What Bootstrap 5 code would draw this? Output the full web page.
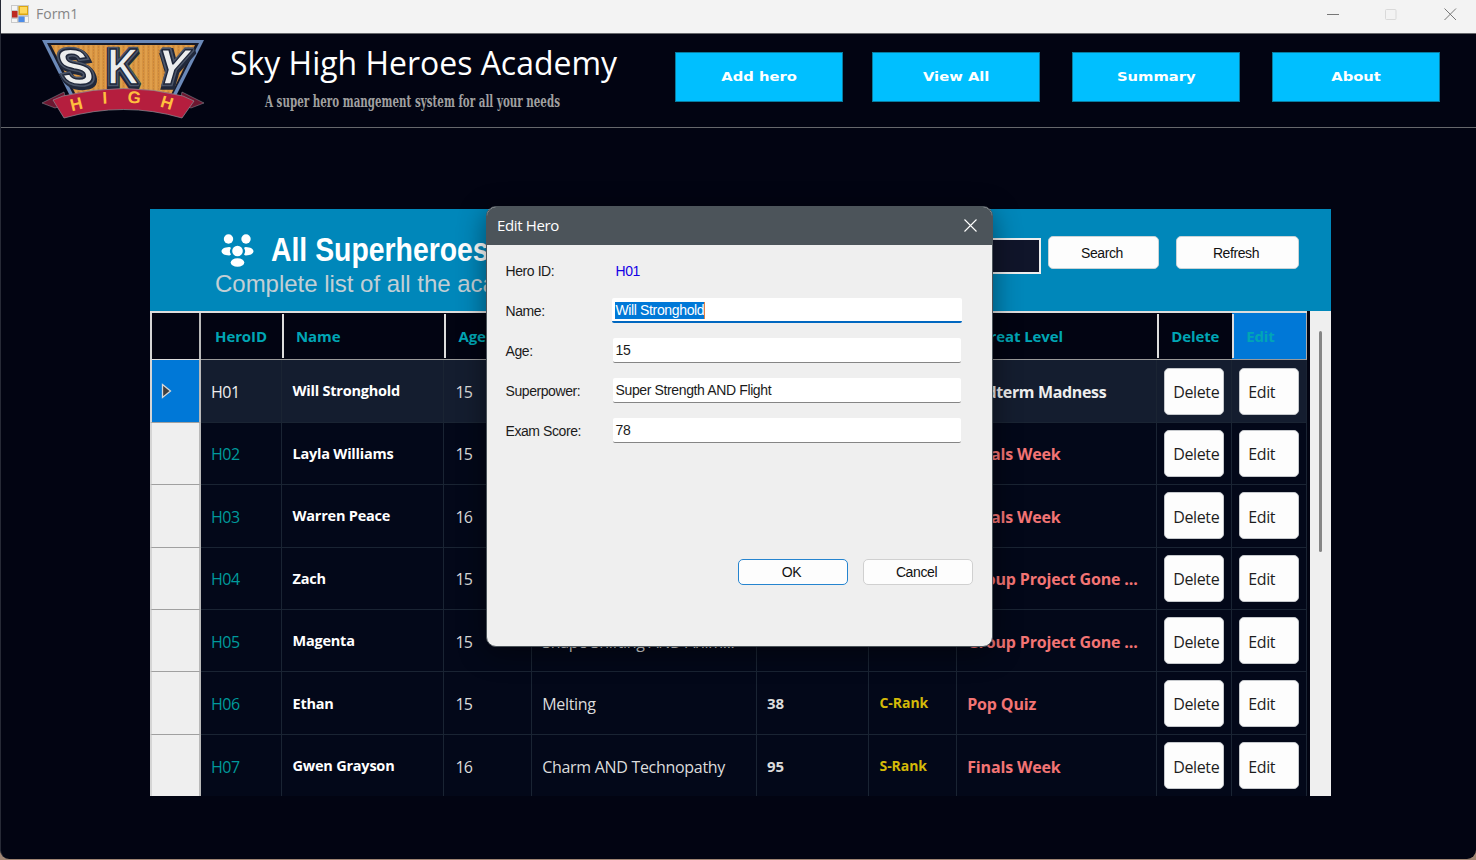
<!DOCTYPE html>
<html lang="en">
<head>
<meta charset="utf-8">
<title>Form1</title>
<link href="https://cdn.jsdelivr.net/npm/bootstrap@5.3.0/dist/css/bootstrap.min.css" rel="stylesheet">
<style>
  body { width: 1476px; height: 860px; background: #a08573; font-family: "Open Sans", "Noto Sans", sans-serif; line-height: 1.2; }
  .window { height: 859px; background: #020412; border-radius: 0 0 9px 9px; border-left: 1px solid #272a36; }
  .titlebar { height: 33px; margin-left: -1px; background: #f3f3f3; color: #858585; padding: 0 19px 6px 11px; }
  .titlebar span { font-size: 14px; letter-spacing: 0; margin: 2px 0 0 7px; }
  .brandbar { height: 95px; border: 1px solid #66686c; border-left: 0; border-right: 0; }
  .logo-art { width: 166px; height: 84px; margin: 3px 0 0 39px; }
  .brand-text { width: 440px; padding-left: 24px; }
  .brand-title { font-size: 33px; line-height: 40px; margin-top: 9px; color: #fff; font-weight: 400; transform-origin: 0 0; transform: scaleX(.968); }
  .brand-sub { font: bold 16px/20px "DejaVu Serif", serif; color: #a0a0a0; margin: 9px 0 0 35px; transform-origin: 0 0; transform: scaleX(.645); }
  .navtiles { padding-left: 29px; gap: 32px; }
  .navtile { width: 168px; height: 50px; margin-top: 18px; flex: none; border-radius: 0; background: #00bfff; border: 1px solid #087c9f; color: #fff; font: bold 12.5px "DejaVu Sans", sans-serif; padding: 0 0 2px; }
  .navtile:first-child { margin-right: -3px; }
  .navtile:hover { background: #00bfff; color: #fff; }
  .navtile span { display: inline-block; transform: scaleX(1.18); }
  .panel { width: 1181px; height: 587px; margin: 81px 0 0 149px; background: #020412; overflow: hidden; }
  .panel-top { height: 102px; background: #0087ba; padding: 27px 32px 0 65px; }
  .people-icon { margin: -3px 0 0 4px; }
  .panel-title { font: bold 32.5px/37px "Liberation Sans", sans-serif; color: #fff; margin: -4px 0 0 15px; transform-origin: 0 0; transform: scaleX(.873); }
  .panel-sub { font: 24px/28px "Liberation Sans", sans-serif; color: #c3cfd5; letter-spacing: -.02px; padding-top: 1px; }
  .searchbox { width: 250px; height: 36px; border-radius: 0; background: #10152a; border: 2px solid #eee; margin: 2px 7px 0 0; padding: 0; }
  .winbtn { font: 14px "Liberation Sans", sans-serif; letter-spacing: -.4px; background: #fdfdfd; color: #111; border: 1px solid #c9d3d7; border-radius: 5px; padding: 0 3px 0 0; }
  .find { width: 111px; height: 33px; margin-right: 17px; }
  .reload { width: 123px; height: 33px; }
  .gridrow { display: grid; grid-template-columns: 51px 81px 162.4px 87.3px 225.2px 112.6px 87.7px 200px 75px 74.8px; height: 62.45px; width: 1157px; }
  .gridrow > div { border-right: 1px solid #1a2433; border-bottom: 1px solid #1a2433; padding-left: 10px; white-space: nowrap; overflow: hidden; display: flex; align-items: center; background: #030819; color: #dcdcdc; font-size: 16px; }
  .gridrow > .rowhead { background: #efefef; border-left: 2px solid #d5d5d5; border-right: 2px solid #b9b9b9; border-bottom: 1px solid #a0a0a0; padding-left: 9px; }
  .gridhead { height: 49.3px; border-top: 2px solid #ddd; }
  .gridhead > div { background: #020412; color: #00a6b5; font-size: 15px; font-weight: 700; letter-spacing: -.1px; border-bottom: 1px solid #999; padding-left: 14px; border-right: 0; }
  .gridhead > div + div + div { background: linear-gradient(#ddd, #ddd) no-repeat 0 50% / 2px 44px #020412; }
  .gridhead > .rowhead { background: #020412; border-bottom: 1px solid #ddd; }
  .gridhead > div.hot { background: linear-gradient(#ddd, #ddd) no-repeat 0 50% / 2px 44px #0078d7; border-right: 1px solid #aaa; }
  .gridrow > .hid { color: #009a9c; letter-spacing: -.5px; padding-top: 3px; }
  .gridrow > .hname { color: #fff; font-size: 14.5px; font-weight: 700; letter-spacing: -.22px; padding-left: 10.5px; }
  .gridrow > .hage { letter-spacing: -.7px; padding: 3px 0 0 11px; }
  .gridrow > .hpower { letter-spacing: -.3px; padding: 3px 0 0 10.500px; }
  .gridrow > .hscore { font-size: 15px; font-weight: 700; }
  .gridrow > .hrank { color: #d4ba08; font-size: 14px; font-weight: 700; letter-spacing: -.05px; padding-top: 1px; }
  .gridrow > .hthreat { color: #f37474; font-weight: 700; letter-spacing: -.15px; padding-top: 3px; }
  .gridrow.current > .hthreat { letter-spacing: -.35px; }
  .gridrow > .act { padding: 0 0 0 7px; }
  .cellbtn { width: 60px; height: 47px; background: #fdfdfd; color: #1d1d1d; border: 1px solid #c5c8cc; border-radius: 5px; padding: 2px 0 0 8px; font-size: 16px; letter-spacing: -.35px; text-align: left; }
  .current > div { background: #141d2f; }
  .gridrow.current > .rowhead { background: #0078d7; }
  .gridrow.current > .hid, .gridrow.current > .hthreat { color: #eee; }
  .scroll-track { width: 21px; background: #efefef; padding: 20px 0 0 9px; }
  .scroll-thumb { width: 3px; height: 221px; background: #858585; border-radius: 2px; }
  .dialog { position: absolute; left: 486px; top: 206px; width: 507px; height: 441px; border: 1px solid #4c545a; border-radius: 10px; background: #efefef; overflow: hidden; box-shadow: 0 6px 28px rgba(0,0,0,.45); font: 14px/20px "Liberation Sans", sans-serif; letter-spacing: -.42px; color: #1b1b1b; }
  .dialog-head { height: 38px; background: #4c545a; color: #fff; font: 15px "Open Sans", sans-serif; padding: 0 15px 2px 10px; letter-spacing: -.35px; }
  .dialog-body { padding: 16px 30px 0 18.500px; }
  .line { height: 40px; }
  .line label { width: 107px; }
  .idval { color: #1400e6; padding-left: 3px; }
  .field { height: 25px; width: 348px; background: #fff; border: 0; border-bottom: 1px solid #858585; border-radius: 2px; padding: 2px 3px; margin-top: -3px; letter-spacing: -.37px; }
  .field.active { width: 350px; border-bottom: 2px solid #0067c0; letter-spacing: -.35px; }
  .field mark { background: #0078d7; color: #fff; padding: 0; border-right: 1px solid #e08040; display: inline-block; line-height: 17px; }
  .actions { gap: 15px; padding: 98px 19px 0 0; }
  .dialog .winbtn { width: 110px; height: 26px; border-color: #d0d0d0; }
  .dialog .winbtn.main { border-color: #2584cf; }
</style>
<script src="https://cdn.jsdelivr.net/npm/bootstrap@5.3.0/dist/js/bootstrap.bundle.min.js"></script>
</head>
<body class="overflow-hidden position-relative">
<div class="window overflow-hidden">
  <header class="titlebar d-flex align-items-center">
    <svg width="18" height="18" viewBox="0 0 18 18"><rect width="18" height="18" fill="#c9c9c9"/><path d="M1 1h5v4H1zM1 14h5v3H1zM14 12h3v5h-3z" fill="#f5f5f5"/><rect x="1" y="6" width="5.500" height="6.500" fill="#bd2a22"/><rect x="7.500" y="1" width="9.500" height="9" fill="#dca712"/><rect x="9" y="2" width="7" height="6.500" fill="#ffd95c"/><rect x="7.500" y="11.500" width="6" height="5.500" fill="#4c8ce8"/></svg>
    <span class="me-auto">Form1</span>
    <svg width="132" height="14" viewBox="0 0 132 14" fill="none"><path d="M2 7.500h12" stroke="#777"/><rect x="60.500" y="2.500" width="10.500" height="10" rx="1" stroke="#d9d9d9"/><path d="M119.500 1.500l11.500 11.500M131 1.500l-11.500 11.500" stroke="#777"/></svg>
  </header>

  <div class="brandbar d-flex">
    <svg class="logo-art flex-shrink-0" viewBox="0 0 166 84">
      <defs>
        <pattern id="grain" width="5" height="3" patternUnits="userSpaceOnUse"><rect width="5" height="3" fill="#d8933f"/><path d="M1 0v3" stroke="#e6ab58"/><path d="M3 1h1" stroke="#b87a3a"/></pattern>
        <path id="arc" d="M32 75Q84 56 144 77"/>
      </defs>
      <path d="M2 3h162L131 69H35z" fill="#6b89b8"/>
      <path d="M7 6h152L128 67H38z" fill="#171b2b"/>
      <path d="M11 8h144L127 66H40z" fill="url(#grain)"/>
      <g font-family="Liberation Sans, sans-serif" font-weight="bold" font-size="48" stroke-linejoin="miter" stroke-miterlimit="2">
        <g fill="#20283b" stroke="#20283b" stroke-width="7">
          <text transform="matrix(1.02 0 .3 1.04 25 49)">S</text><text transform="matrix(.92 0 0 1.04 67 49)">K</text><text transform="matrix(1.02 0 -.3 1.04 112 49)">Y</text>
        </g>
        <g fill="#4d576a" stroke="#4d576a" stroke-width="4.500">
          <text transform="matrix(1.02 0 .3 1.04 24 47)">S</text><text transform="matrix(.92 0 0 1.04 67 47)">K</text><text transform="matrix(1.02 0 -.3 1.04 111 47)">Y</text>
        </g>
        <g fill="#eceded" stroke="#20283b" stroke-width="1.500">
          <text transform="matrix(1.02 0 .3 1.04 24 47)">S</text><text transform="matrix(.92 0 0 1.04 67 47)">K</text><text transform="matrix(1.02 0 -.3 1.04 111 47)">Y</text>
        </g>
      </g>
      <path d="M2 66l22-11 3 12-12 4zM164 66l-22-11-3 12 12 4z" fill="#6c1730" stroke="#9098a0" stroke-width=".5"/>
      <path d="M13 63l10-4Q84 44 143 59l11 5-12 17Q84 64 24 81z" fill="#b51e3e" stroke="#8a8f98" stroke-width=".7"/>
      <text font-family="Liberation Sans, sans-serif" font-weight="bold" font-size="17" letter-spacing="19.500" fill="#ffbf3e"><textPath href="#arc">HIGH</textPath></text>
    </svg>
    <div class="brand-text flex-shrink-0">
      <h1 class="brand-title text-nowrap mb-0">Sky High Heroes Academy</h1>
      <div class="brand-sub text-nowrap">A super hero mangement system for all your needs</div>
    </div>
    <nav class="navtiles d-flex flex-shrink-0">
      <button class="btn navtile"><span>Add hero</span></button>
      <button class="btn navtile"><span>View All</span></button>
      <button class="btn navtile"><span>Summary</span></button>
      <button class="btn navtile"><span>About</span></button>
    </nav>
  </div>

  <main class="panel">
    <div class="panel-top d-flex">
      <div class="flex-fill">
        <div class="d-flex">
          <svg class="people-icon" width="37" height="34" viewBox="0 0 37 34" fill="#fff"><circle cx="9.500" cy="6" r="4.700"/><circle cx="27" cy="6" r="4.700"/><circle cx="18.500" cy="18" r="5.300"/><ellipse cx="18.500" cy="29.500" rx="6.800" ry="4.300"/><path d="M10.200 14C5.500 14.200 2.500 16 2.500 18.300s3 4 7.700 4.200c1.800-.3 1.900-.9 1.400-1.700-1-1.700-1-3.300 0-5 .5-.9.400-1.500-1.400-1.800zM26.800 14c4.700.2 7.700 2 7.700 4.300s-3 4-7.700 4.200c-1.800-.3-1.900-.9-1.400-1.700 1-1.700 1-3.300 0-5-.5-.9-.4-1.500 1.400-1.800z"/></svg>
          <h2 class="panel-title text-nowrap">All Superheroes</h2>
        </div>
        <div class="panel-sub text-nowrap">Complete list of all the aca</div>
      </div>
      <div class="searchbox flex-shrink-0"></div>
      <button class="btn winbtn find flex-shrink-0">Search</button>
      <button class="btn winbtn reload flex-shrink-0">Refresh</button>
    </div>
    <div class="d-flex">
      <div id="heroes" class="me-auto">
        <div class="gridrow gridhead"><div class="rowhead"></div><div>HeroID</div><div>Name</div><div>Age</div><div></div><div></div><div></div><div>Threat Level</div><div>Delete</div><div class="hot">Edit</div></div>
      </div>
      <div class="scroll-track"><div class="scroll-thumb"></div></div>
    </div>
  </main>
</div>

<section class="dialog" role="dialog">
  <div class="dialog-head d-flex align-items-center justify-content-between">Edit Hero
    <svg width="13" height="13" viewBox="0 0 13 13" stroke="#fff" stroke-width="1.100"><path d="M.5.500l12 12M12.500.500l-12 12"/></svg>
  </div>
  <div class="dialog-body">
    <div class="line d-flex"><label>Hero ID:</label><span class="idval">H01</span></div>
    <div class="line d-flex"><label>Name:</label><div class="field active"><mark>Will Stronghold</mark></div></div>
    <div class="line d-flex"><label>Age:</label><div class="field">15</div></div>
    <div class="line d-flex"><label>Superpower:</label><div class="field">Super Strength AND Flight</div></div>
    <div class="line d-flex"><label>Exam Score:</label><div class="field">78</div></div>
  </div>
  <div class="actions d-flex justify-content-end"><button class="btn winbtn main">OK</button><button class="btn winbtn">Cancel</button></div>
</section>
<script>
  const heroes = [
    ["H01", "Will Stronghold", 15, "", "", "", "Midterm Madness"],
    ["H02", "Layla Williams", 15, "", "", "", "Finals Week"],
    ["H03", "Warren Peace", 16, "", "", "", "Finals Week"],
    ["H04", "Zach", 15, "", "", "", "Group Project Gone ..."],
    ["H05", "Magenta", 15, "Shape Shifting AND Anim...", "", "", "Group Project Gone ..."],
    ["H06", "Ethan", 15, "Melting", 38, "C-Rank", "Pop Quiz"],
    ["H07", "Gwen Grayson", 16, "Charm AND Technopathy", 95, "S-Rank", "Finals Week"]
  ];
  const kinds = ["hid", "hname", "hage", "hpower", "hscore", "hrank", "hthreat"];
  const arrow = '<svg width="12" height="16" viewBox="0 0 12 16"><path d="M1.500 1.500L9.500 8l-8 6.500z" fill="#404040" stroke="#d8d8d8" stroke-width="1.300"/></svg>';
  document.getElementById("heroes").insertAdjacentHTML("beforeend", heroes.map((h, i) =>
    `<div class="gridrow ${i ? "" : "current"}"><div class="rowhead">${i ? "" : arrow}</div>` +
    h.map((v, k) => `<div class="${kinds[k]}">${v}</div>`).join("") +
    '<div class="act"><button class="btn cellbtn">Delete</button></div><div class="act"><button class="btn cellbtn">Edit</button></div></div>').join(""));
</script>
</body>
</html>
